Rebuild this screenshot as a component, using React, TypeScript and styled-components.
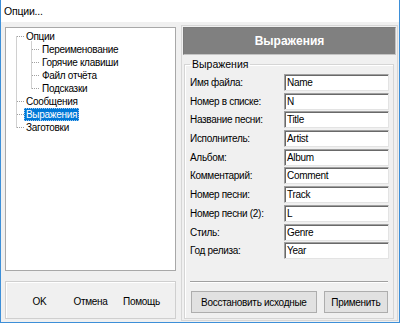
import React from "react";
import styled, { createGlobalStyle } from "styled-components";

const Global = createGlobalStyle`
  html, body { margin: 0; padding: 0; background: #fff; }
  body { font-family: "Liberation Sans", Arial, sans-serif; }
  * { box-sizing: border-box; }
`;

const Window = styled.div`
  width: 400px;
  height: 323px;
  display: flex;
  flex-direction: column;
  border: 1px solid #3d8fd8;
  border-top: none;
  background: #f0f0f0;
  overflow: hidden;
`;

const TitleBar = styled.div`
  height: 22px;
  flex: none;
  background: #fff;
  display: flex;
  align-items: center;
  padding-left: 3px;
  font-size: 10.5px;
  letter-spacing: -0.2px;
  color: #000;
`;

const Body = styled.div`
  flex: 1;
  display: flex;
  padding: 3px 0 0 4px;
`;

const LeftColumn = styled.div`
  width: 171px;
  display: flex;
  flex-direction: column;
  gap: 10px;
  margin-top: 2px;
`;

const TreeBox = styled.div`
  position: relative;
  height: 244px;
  background: #fff;
  border: 1px solid #a8a8a8;
  padding-top: 2px;
  font-size: 10px;
  letter-spacing: -0.3px;
  color: #000;
`;

const TreeLines = styled.svg`
  position: absolute;
  left: 0;
  top: 0;
  pointer-events: none;
`;

const TreeRow = styled.div<{ $level: number }>`
  height: 13px;
  line-height: 13px;
  padding-left: ${(p) => (p.$level === 0 ? 18 : 34)}px;
  white-space: nowrap;
`;

const TreeLabel = styled.span<{ $selected?: boolean }>`
  display: inline-block;
  padding: 0 2px;
  height: 13px;
  background: ${(p) => (p.$selected ? "#0078d7" : "transparent")};
  color: ${(p) => (p.$selected ? "#fff" : "#000")};
  outline: ${(p) => (p.$selected ? "1px dotted #9cc7f0" : "none")};
  outline-offset: -1px;
`;

const ButtonBox = styled.div`
  height: 38px;
  border: 1px solid #cfcfcf;
  box-shadow: inset 1px 1px 0 #fff;
  display: flex;
  align-items: center;
  padding: 2px 0 0 8px;
`;

const FlatButton = styled.div`
  width: 51px;
  height: 22px;
  display: flex;
  align-items: center;
  justify-content: center;
  font-size: 10px;
  letter-spacing: -0.3px;
  color: #000;
`;

const RightPanel = styled.div`
  width: 217px;
  height: 296px;
  margin-left: 5px;
  border: 1px solid #d6d6d6;
  padding: 1px;
  display: flex;
  flex-direction: column;
`;

const Header = styled.div`
  height: 28px;
  flex: none;
  background: #808080;
  border: 1px solid #7a7a7a;
  border-right-color: #c4c4c4;
  border-bottom-color: #c4c4c4;
  display: flex;
  align-items: center;
  justify-content: center;
  color: #fff;
  font-weight: bold;
  font-size: 12px;
`;

const Group = styled.fieldset`
  margin: 3px 2px 0 1px;
  padding: 4px 5px 5px 5px;
  flex: 1;
  border: 1px solid #d5d5d5;
  box-shadow: inset 1px 1px 0 #fff;
  display: flex;
  flex-direction: column;
  min-width: 0;
`;

const Legend = styled.legend`
  font-size: 10.5px;
  padding: 0 2px;
  margin-left: 0;
  color: #000;
`;

const Form = styled.div`
  display: grid;
  grid-template-columns: 94px 105px;
  grid-auto-rows: 17px;
  row-gap: 1.7px;
  align-items: center;
`;

const Label = styled.div`
  font-size: 10px;
  letter-spacing: -0.3px;
  color: #000;
  white-space: nowrap;
`;

const Field = styled.div`
  height: 17px;
  background: #fff;
  border: 1px solid #a0a0a0;
  border-right-color: #e3e3e3;
  border-bottom-color: #e3e3e3;
  box-shadow: inset 1px 1px 0 #696969;
  font-size: 10px;
  letter-spacing: -0.3px;
  line-height: 15px;
  padding-left: 2px;
  color: #000;
`;

const Spacer = styled.div`
  flex: 1;
`;

const Separator = styled.div`
  height: 2px;
  border-top: 1px solid #a0a0a0;
  border-bottom: 1px solid #fff;
  margin: 0 0 8px 0;
`;

const ButtonRow = styled.div`
  display: flex;
  gap: 7px;
  padding-left: 1px;
`;

const PushButton = styled.div<{ $w: number }>`
  width: ${(p) => p.$w}px;
  height: 22px;
  background: #e1e1e1;
  border: 1px solid #adadad;
  display: flex;
  align-items: center;
  justify-content: center;
  font-size: 10px;
  letter-spacing: -0.3px;
  color: #000;
`;

const tree: { label: string; level: number; selected?: boolean }[] = [
  { label: "Опции", level: 0 },
  { label: "Переименование", level: 1 },
  { label: "Горячие клавиши", level: 1 },
  { label: "Файл отчёта", level: 1 },
  { label: "Подсказки", level: 1 },
  { label: "Сообщения", level: 0 },
  { label: "Выражения", level: 0, selected: true },
  { label: "Заготовки", level: 0 },
];

const fields: [string, string][] = [
  ["Имя файла:", "Name"],
  ["Номер в списке:", "N"],
  ["Название песни:", "Title"],
  ["Исполнитель:", "Artist"],
  ["Альбом:", "Album"],
  ["Комментарий:", "Comment"],
  ["Номер песни:", "Track"],
  ["Номер песни (2):", "L"],
  ["Стиль:", "Genre"],
  ["Год релиза:", "Year"],
];

export default function App() {
  const rowY = (i: number) => 2 + i * 13 + 6.5;
  return (
    <>
      <Global />
      <Window>
        <TitleBar>Опции...</TitleBar>
        <Body>
          <LeftColumn>
            <TreeBox>
              <TreeLines width="169" height="140">
                <g stroke="#a0a0a0" strokeWidth="1" strokeDasharray="1 1" fill="none">
                  <line x1="10.5" y1={rowY(0)} x2="10.5" y2={rowY(7)} />
                  {[0, 5, 6, 7].map((i) => (
                    <line key={i} x1="11" y1={rowY(i)} x2="18" y2={rowY(i)} />
                  ))}
                  <line x1="25.5" y1={rowY(0) + 5} x2="25.5" y2={rowY(4)} />
                  {[1, 2, 3, 4].map((i) => (
                    <line key={i} x1="26" y1={rowY(i)} x2="33" y2={rowY(i)} />
                  ))}
                </g>
              </TreeLines>
              {tree.map((t) => (
                <TreeRow key={t.label} $level={t.level}>
                  <TreeLabel $selected={t.selected}>{t.label}</TreeLabel>
                </TreeRow>
              ))}
            </TreeBox>
            <ButtonBox>
              <FlatButton>OK</FlatButton>
              <FlatButton>Отмена</FlatButton>
              <FlatButton>Помощь</FlatButton>
            </ButtonBox>
          </LeftColumn>
          <RightPanel>
            <Header>Выражения</Header>
            <Group>
              <Legend>Выражения</Legend>
              <Form>
                {fields.map(([l, v]) => (
                  <React.Fragment key={l}>
                    <Label>{l}</Label>
                    <Field>{v}</Field>
                  </React.Fragment>
                ))}
              </Form>
              <Spacer />
              <Separator />
              <ButtonRow>
                <PushButton $w={127}>Восстановить исходные</PushButton>
                <PushButton $w={65}>Применить</PushButton>
              </ButtonRow>
            </Group>
          </RightPanel>
        </Body>
      </Window>
    </>
  );
}
